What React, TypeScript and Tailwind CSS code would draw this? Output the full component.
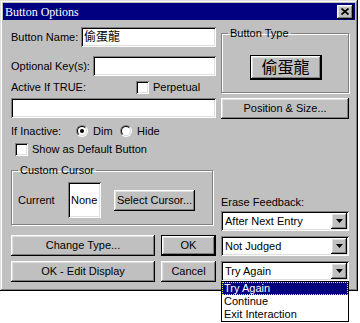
const raised =
  'bg-[#c0c0c0] shadow-[inset_-1px_-1px_#000,inset_1px_1px_#fff,inset_-2px_-2px_#808080,inset_2px_2px_#dfdfdf]';
const sunken =
  'bg-white shadow-[inset_1px_1px_#808080,inset_-1px_-1px_#fff,inset_2px_2px_#000,inset_-2px_-2px_#dfdfdf]';
const group = 'border border-[#808080] shadow-[inset_1px_1px_#fff,1px_1px_#fff]';

function Check() {
  return <div className={`w-[13px] h-[13px] shrink-0 ${sunken}`} />;
}

function Radio({ on }: { on?: boolean }) {
  return (
    <div className="w-[12px] h-[12px] shrink-0 rounded-full border border-t-[#808080] border-l-[#808080] border-b-white border-r-white">
      <div className="w-full h-full rounded-full bg-white border border-t-black border-l-black border-b-[#dfdfdf] border-r-[#dfdfdf] flex items-center justify-center">
        {on && <div className="w-[4px] h-[4px] rounded-full bg-black" />}
      </div>
    </div>
  );
}

function Combo({ value }: { value: string }) {
  return (
    <div className={`h-[20px] flex items-center pl-[4px] pr-[2px] ${sunken}`}>
      <span className="flex-1">{value}</span>
      <div className={`w-[16px] h-[16px] flex items-center justify-center ${raised}`}>
        <svg width="7" height="4" viewBox="0 0 7 4">
          <path d="M0 0h7L3.5 4z" fill="#000" />
        </svg>
      </div>
    </div>
  );
}

export default function App() {
  return (
    <div className="relative w-[360px] h-[323px] bg-white overflow-hidden font-['Liberation_Sans',Arial,sans-serif] text-[11px] leading-[13px] text-black">
      <div className="w-[358px] h-[291px] p-[3px] bg-[#c0c0c0] shadow-[inset_-1px_-1px_#000,inset_1px_1px_#dfdfdf,inset_-2px_-2px_#808080,inset_2px_2px_#fff]">
        {/* title bar */}
        <div className="h-[17px] bg-[#000080] flex items-center justify-between pl-[2px] pr-[2px]">
          <span className="font-['Liberation_Serif',serif] text-[12px] leading-[14px] text-white">Button Options</span>
          <div className={`w-[16px] h-[14px] flex items-center justify-center ${raised}`}>
            <svg width="8" height="7" viewBox="0 0 8 7">
              <path d="M0.5 0.5L7.5 6.5M7.5 0.5L0.5 6.5" stroke="#000" strokeWidth="1.7" />
            </svg>
          </div>
        </div>

        <div className="flex gap-[5px] pl-[8px]">
          {/* left column */}
          <div className="w-[205px] flex flex-col">
            <div className="mt-[7px] h-[20px] flex items-center">
              <span className="w-[70px] shrink-0">Button Name:</span>
              <div className={`flex-1 h-full flex items-center pl-[3px] font-['Liberation_Sans','Noto_Sans_CJK_TC',sans-serif] text-[12px] ${sunken}`}>
                偷蛋龍
              </div>
            </div>
            <div className="mt-[9px] h-[20px] flex items-center">
              <span className="w-[82px] shrink-0">Optional Key(s):</span>
              <div className={`flex-1 h-full ${sunken}`} />
            </div>
            <div className="mt-[5px] h-[13px] flex items-center">
              <span className="w-[125px] shrink-0">Active If TRUE:</span>
              <Check />
              <span className="ml-[4px]">Perpetual</span>
            </div>
            <div className={`mt-[4px] h-[20px] ${sunken}`} />
            <div className="mt-[7px] h-[12px] flex items-center">
              <span className="w-[65px] shrink-0">If Inactive:</span>
              <Radio on />
              <span className="ml-[5px] w-[27px]">Dim</span>
              <Radio />
              <span className="ml-[5px]">Hide</span>
            </div>
            <div className="mt-[6px] h-[13px] flex items-center pl-[4px]">
              <Check />
              <span className="ml-[4px]">Show as Default Button</span>
            </div>
            <fieldset className={`mt-[8px] h-[61px] w-[202px] ${group}`}>
              <legend className="ml-[6px] px-[2px] leading-[13px]">Custom Cursor</legend>
              <div className="mt-[5px] h-[36px] flex items-center pl-[6px]">
                <span className="w-[50px] shrink-0">Current</span>
                <div className={`w-[33px] h-[36px] flex items-center pl-[3px] ${sunken}`}>None</div>
                <div className={`ml-[13px] w-[81px] h-[21px] flex items-center justify-center ${raised}`}>
                  Select Cursor...
                </div>
              </div>
            </fieldset>
            <div className="mt-[10px] h-[21px] flex gap-[6px]">
              <div className={`w-[144px] flex items-center justify-center ${raised}`}>Change Type...</div>
              <div className={`flex-1 flex items-center justify-center border border-black ${raised}`}>OK</div>
            </div>
            <div className="mt-[5px] h-[21px] flex gap-[6px]">
              <div className={`w-[144px] flex items-center justify-center ${raised}`}>OK - Edit Display</div>
              <div className={`flex-1 flex items-center justify-center ${raised}`}>Cancel</div>
            </div>
          </div>

          {/* right column */}
          <div className="w-[128px] flex flex-col">
            <fieldset className={`mt-[7px] h-[66px] ${group}`}>
              <legend className="ml-[6px] px-[2px] leading-[13px]">Button Type</legend>
              <div className="flex justify-center pt-[15px] pl-[1px]">
                <div className={`w-[72px] h-[25px] flex items-center justify-center border border-black font-['Liberation_Sans','Noto_Sans_CJK_TC',sans-serif] text-[16px] ${raised}`}>
                  偷蛋龍
                </div>
              </div>
            </fieldset>
            <div className={`mt-[5px] h-[21px] flex items-center justify-center ${raised}`}>Position &amp; Size...</div>
            <span className="mt-[77px] h-[13px]">Erase Feedback:</span>
            <div className="mt-[2px]">
              <Combo value="After Next Entry" />
            </div>
            <div className="mt-[5px]">
              <Combo value="Not Judged" />
            </div>
            <div className="mt-[5px]">
              <Combo value="Try Again" />
            </div>
          </div>
        </div>
      </div>

      {/* open dropdown list */}
      <div className="absolute left-[221px] top-[281px] w-[128px] h-[41px] bg-white border border-black">
        <div className="h-[13px] flex items-center pl-[1px] bg-[#000080] text-white border border-dotted border-[#ffff00]">
          Try Again
        </div>
        <div className="h-[13px] flex items-center pl-[2px]">Continue</div>
        <div className="h-[13px] flex items-center pl-[2px]">Exit Interaction</div>
      </div>
    </div>
  );
}
